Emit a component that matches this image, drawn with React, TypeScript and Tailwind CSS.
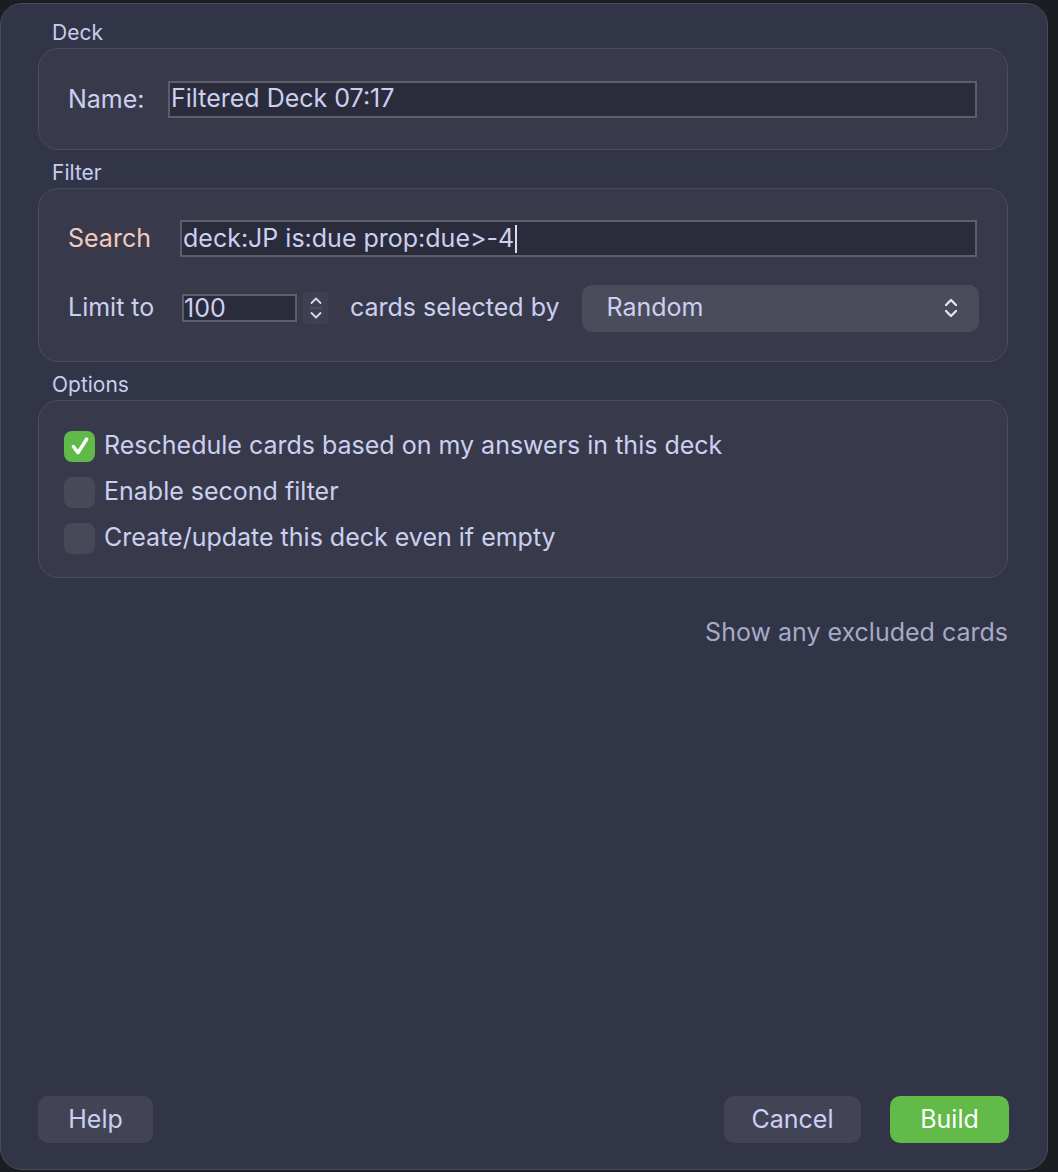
import React from "react";

const font = { fontFamily: "Inter, 'Noto Sans', sans-serif" };

function SectionLabel({ children }: { children: React.ReactNode }) {
  return (
    <div className="pl-[14px] text-[21px] leading-[24px] text-[#c9cdee] mt-[11px] mb-[3px]">{children}</div>
  );
}

function Checkbox({ checked }: { checked?: boolean }) {
  if (checked) {
    return (
      <div className="w-[31px] h-[31px] rounded-[8px] bg-[#5fba47] flex items-center justify-center shrink-0">
        <svg width="22" height="22" viewBox="0 0 20 20" fill="none">
          <path d="M4 10.5 L8.2 16 L16 3.8" stroke="white" strokeWidth="3.2" strokeLinecap="round" strokeLinejoin="round" />
        </svg>
      </div>
    );
  }
  return <div className="w-[31px] h-[31px] rounded-[8px] bg-[#474959] shrink-0" />;
}

export default function App() {
  return (
    <div className="w-[1058px] h-[1172px] bg-[#1c1d22] pt-[3px] pr-[10px] pb-[2px]" style={font}>
      <div className="h-full rounded-[22px] bg-[#323447] border border-[#4a4c5c] pl-[37px] pr-[39px] pt-[6px] pb-[26px] flex flex-col">
        <SectionLabel>Deck</SectionLabel>
        <div className="rounded-[20px] bg-[#383a4b] border border-[#4b4d5e] h-[102px] pl-[29px] pr-[30px] flex items-center">
          <span className="w-[100px] text-[25px] text-[#ccd0f0] pt-[2px]">Name:</span>
          <div className="flex-1 h-[37px] bg-[#2a2c3c] border-2 border-[#5d5e68] flex items-center text-[25px] text-[#ccd0f0] pl-[1px]">
            Filtered Deck 07:17
          </div>
        </div>

        <SectionLabel>Filter</SectionLabel>
        <div className="rounded-[20px] bg-[#383a4b] border border-[#4b4d5e] h-[174px] pl-[29px] pr-[28px] pt-[31px] flex flex-col">
          <div className="flex items-center pr-[2px]">
            <span className="w-[112px] text-[25px] text-[#f2cbbd]">Search</span>
            <div className="flex-1 h-[37px] bg-[#2a2c3c] border-2 border-[#5d5e68] flex items-center text-[25px] text-[#ccd0f0] pl-[1px]">
              deck:JP is:due prop:due&gt;-4
              <span className="inline-block w-[2px] h-[28px] bg-[#d8dbf2] ml-[1px]" />
            </div>
          </div>
          <div className="flex items-center mt-[27px]">
            <span className="w-[114px] text-[25px] text-[#ccd0f0]">Limit to</span>
            <div className="w-[115px] h-[28px] bg-[#2a2c3c] border-2 border-[#5d5e68] flex items-center text-[25px] text-[#ccd0f0] leading-none">
              100
            </div>
            <div className="ml-[6px] w-[25px] h-[32px] rounded-[3px] bg-[#3f4152] flex flex-col items-center justify-center">
              <svg width="16" height="28" viewBox="0 0 16 28" fill="none">
                <path d="M3.5 9 L8 4.5 L12.5 9" stroke="#d6d9ee" strokeWidth="1.8" strokeLinecap="round" strokeLinejoin="round" />
                <line x1="2" y1="14" x2="14" y2="14" stroke="#5a5c6c" strokeWidth="1" />
                <path d="M3.5 19 L8 23.5 L12.5 19" stroke="#d6d9ee" strokeWidth="1.8" strokeLinecap="round" strokeLinejoin="round" />
              </svg>
            </div>
            <span className="ml-[22px] text-[25px] text-[#ccd0f0]">cards selected by</span>
            <div className="ml-[22px] flex-1 h-[47px] rounded-[10px] bg-[#4a4c5b] flex items-center pl-[25px] pr-[20px] justify-between">
              <span className="text-[25px] text-[#ccd0f0]">Random</span>
              <svg width="16" height="24" viewBox="0 0 16 24" fill="none">
                <path d="M3 9 L8 4 L13 9" stroke="#e6e8f4" strokeWidth="2.2" strokeLinecap="round" strokeLinejoin="round" />
                <path d="M3 15 L8 20 L13 15" stroke="#e6e8f4" strokeWidth="2.2" strokeLinecap="round" strokeLinejoin="round" />
              </svg>
            </div>
          </div>
        </div>

        <SectionLabel>Options</SectionLabel>
        <div className="rounded-[20px] bg-[#383a4b] border border-[#4b4d5e] h-[178px] pl-[25px] pt-[22px] flex flex-col">
          {[
            { t: "Reschedule cards based on my answers in this deck", c: true },
            { t: "Enable second filter", c: false },
            { t: "Create/update this deck even if empty", c: false },
          ].map((r) => (
            <div key={r.t} className="h-[46px] flex items-center gap-[9px]">
              <Checkbox checked={r.c} />
              <span className="text-[25px] text-[#ccd0f0]">{r.t}</span>
            </div>
          ))}
        </div>

        <div className="mt-[36px] flex justify-end">
          <span className="text-[25px] text-[#a6aac6]">Show any excluded cards</span>
        </div>

        <div className="flex-1" />

        <div className="flex items-center">
          <button className="w-[115px] h-[47px] rounded-[10px] bg-[#424456] text-[25px] text-[#ccd0f0]">Help</button>
          <div className="flex-1" />
          <button className="w-[137px] h-[47px] rounded-[10px] bg-[#424456] text-[25px] text-[#ccd0f0]">Cancel</button>
          <button className="ml-[29px] mr-[-1px] w-[119px] h-[47px] rounded-[10px] bg-[#62ba48] text-[25px] text-white">Build</button>
        </div>
      </div>
    </div>
  );
}
